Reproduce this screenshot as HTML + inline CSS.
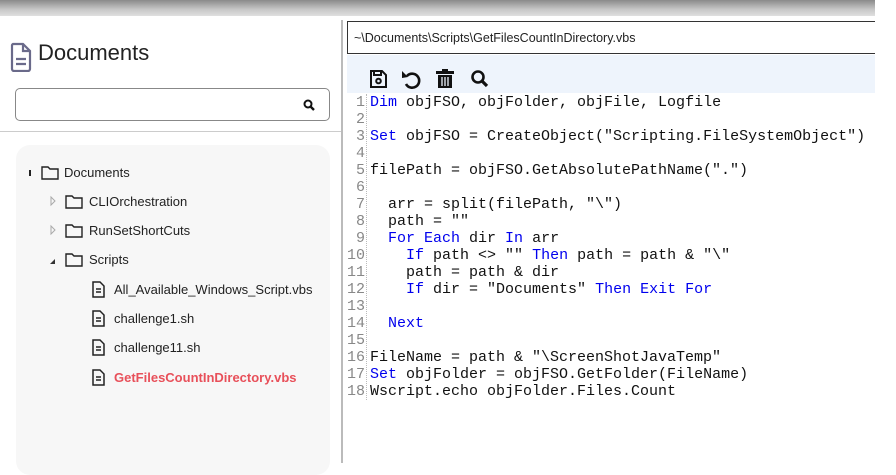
<!DOCTYPE html>
<html><head><style>
*{margin:0;padding:0;box-sizing:border-box}
body{width:896px;height:463px;overflow:hidden;background:#fff;font-family:"Liberation Sans",sans-serif;position:relative}
.top{position:absolute;left:0;top:0;width:875px;height:16px;background:linear-gradient(#8a8a8a,#c8c8c8 60%,#e0e0e0)}
.title{position:absolute;left:38px;top:40px;font-size:22px;color:#222}
.search{position:absolute;left:15px;top:88px;width:315px;height:33px;border:1px solid #888;border-radius:5px;background:#fff}
.hr{position:absolute;left:0;top:131px;width:342px;height:1px;background:#ccc}
.tree{position:absolute;left:16px;top:145px;width:314px;height:330px;background:#f7f7f7;border-radius:14px}
.it{position:absolute;font-size:13px;color:#222;white-space:nowrap}
.vline{position:absolute;left:341px;top:20px;width:2px;height:443px;background:#bbb}
.path{position:absolute;left:347px;top:21px;width:528px;height:33px;border:1px solid #333;border-right:none;font-size:12.5px;padding:9px 0 0 6px;color:#222}
.tb{position:absolute;left:347px;top:55px;width:528px;height:38px;background:#eef4fc}
.code{position:absolute;left:343px;top:94px;font-family:"Liberation Mono",monospace;font-size:15px;line-height:17px;color:#111}
.ln{position:absolute;left:0;top:0;width:24px;text-align:right;color:#888;border-right:1px dotted #bbb;padding-right:1px}
.src{position:absolute;left:27px;top:0;white-space:pre}
.k{color:#0000ee}
</style></head><body>
<div class="top"></div>
<svg style="position:absolute;left:10px;top:42px" width="22" height="30" viewBox="0 0 22 30"><path d="M3 2h10l7 7v18a2 2 0 0 1-2 2H4a2 2 0 0 1-2-2V4a2 2 0 0 1 1-2z" fill="none" stroke="#6a6a8a" stroke-width="2.2"/><path d="M13 2v7h7M6 17h10M6 22h10" stroke="#6a6a8a" stroke-width="2.2" fill="none"/></svg>
<div class="title">Documents</div>
<div class="search"><svg style="position:absolute;right:14px;top:10px" width="12" height="12" viewBox="0 0 12 12"><circle cx="5" cy="5" r="3.5" fill="none" stroke="#111" stroke-width="2"/><path d="M7.5 7.5l3.5 3.5" stroke="#111" stroke-width="2.4"/></svg></div>
<div class="hr"></div>
<div class="tree"></div>
<div class="vline"></div>

<svg style="position:absolute;left:0;top:0" width="340" height="463">
<g fill="none" stroke="#222" stroke-width="1.4">
<rect x="29" y="170" width="2" height="6" fill="#222" stroke="none"/>
<path d="M42 167h6l2 2h8v10h-16z"/>
<path d="M51 197l4 4-4 4z" stroke="#aaa" stroke-width="1"/>
<path d="M66 196h6l2 2h8v10h-16z"/>
<path d="M51 226l4 4-4 4z" stroke="#aaa" stroke-width="1"/>
<path d="M66 225h6l2 2h8v10h-16z"/>
<path d="M50 264l5-5v5z" fill="#333" stroke="none"/>
<path d="M66 254h6l2 2h8v10h-16z"/>
</g>
<g fill="none" stroke="#222" stroke-width="1.5">
<path d="M93 282h7l4 4v11h-11z M96 289h5M96 292h5"/>
<path d="M93 311h7l4 4v11h-11z M96 318h5M96 321h5"/>
<path d="M93 340h7l4 4v11h-11z M96 347h5M96 350h5"/>
<path d="M93 370h7l4 4v11h-11z M96 377h5M96 380h5"/>
</g>
</svg>
<div class="it" style="left:64px;top:165px">Documents</div>
<div class="it" style="left:89px;top:194px">CLIOrchestration</div>
<div class="it" style="left:89px;top:223px">RunSetShortCuts</div>
<div class="it" style="left:89px;top:252px">Scripts</div>
<div class="it" style="left:114px;top:282px">All_Available_Windows_Script.vbs</div>
<div class="it" style="left:114px;top:311px">challenge1.sh</div>
<div class="it" style="left:114px;top:340px">challenge11.sh</div>
<div class="it" style="left:114px;top:370px;color:#e8505a;font-weight:bold">GetFilesCountInDirectory.vbs</div>

<div class="path">~\Documents\Scripts\GetFilesCountInDirectory.vbs</div>
<div class="tb"></div>
<svg style="position:absolute;left:368px;top:68px" width="130" height="22" viewBox="0 0 130 22">
<g fill="none" stroke="#111" stroke-width="2">
<path d="M3 3h11l4 4v12H3z"/><rect x="6" y="3" width="7" height="4"/><circle cx="10.5" cy="13" r="2.3"/>
<path d="M39 8a7 7 0 1 1-1 8" stroke-width="2.6"/>
</g>
<path d="M34 3l0 7 6-1z" fill="#111"/>
<rect x="68" y="3" width="18" height="3" fill="#111"/><rect x="74" y="1" width="6" height="3" fill="#111"/>
<path d="M70 7h14v13H70z" fill="#111"/><path d="M74 9v9M77 9v9M80 9v9" stroke="#eef4fc" stroke-width="1.3"/>
<circle cx="110" cy="9" r="5.5" fill="none" stroke="#111" stroke-width="2.6"/><path d="M114 13l5 5" stroke="#111" stroke-width="3.2"/>
</svg>
<div class="code">
<div class="ln">1<br>2<br>3<br>4<br>5<br>6<br>7<br>8<br>9<br>10<br>11<br>12<br>13<br>14<br>15<br>16<br>17<br>18</div>
<div class="src"><span class="k">Dim</span> objFSO, objFolder, objFile, Logfile

<span class="k">Set</span> objFSO = CreateObject("Scripting.FileSystemObject")

filePath = objFSO.GetAbsolutePathName(".")

  arr = split(filePath, "\")
  path = ""
  <span class="k">For Each</span> dir <span class="k">In</span> arr
    <span class="k">If</span> path &lt;&gt; "" <span class="k">Then</span> path = path &amp; "\"
    path = path &amp; dir
    <span class="k">If</span> dir = "Documents" <span class="k">Then Exit For</span>

  <span class="k">Next</span>

FileName = path &amp; "\ScreenShotJavaTemp"
<span class="k">Set</span> objFolder = objFSO.GetFolder(FileName)
Wscript.echo objFolder.Files.Count</div>
</div>
</body></html>
